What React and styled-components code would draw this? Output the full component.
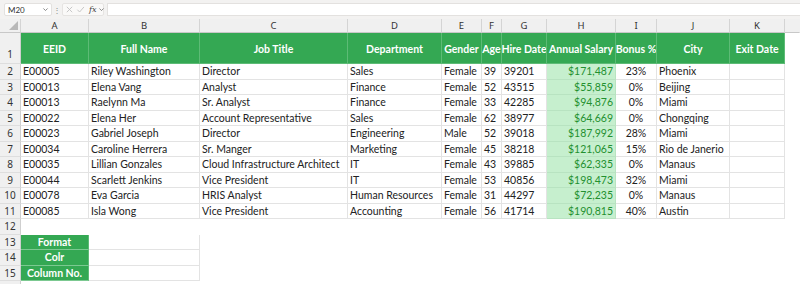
import React from "react";
import styled, { createGlobalStyle, css } from "styled-components";

const GlobalStyle = createGlobalStyle`
  html, body { margin: 0; padding: 0; background: #ffffff; }
  body { font-family: Lato, "Liberation Sans", sans-serif; }
  * { box-sizing: border-box; }
`;

const Page = styled.div`
  width: 800px;
  height: 284px;
  overflow: hidden;
  display: flex;
  flex-direction: column;
  background: #fff;
`;

const FormulaBar = styled.div`
  height: 19px;
  flex: none;
  display: flex;
  align-items: flex-start;
  padding: 3px 0 0 4px;
  background: #f3f2f1;
  gap: 0;
`;

const NameBox = styled.div`
  width: 48px;
  height: 13px;
  background: #fff;
  border: 1px solid #e3e1df;
  border-radius: 2px;
  display: flex;
  align-items: center;
  justify-content: space-between;
  padding: 0 2px 0 3px;
  font-size: 8px;
  color: #333;
`;

const Dots = styled.div`
  width: 10px;
  height: 13px;
  display: flex;
  align-items: center;
  justify-content: center;
  color: #8a8a8a;
  font-size: 8px;
`;

const FxGroup = styled.div`
  width: 42px;
  height: 13px;
  display: flex;
  align-items: center;
  gap: 2px;
  padding: 0 2px;
  border: 1px solid #e6e4e2;
  border-radius: 2px;
  background: #faf9f8;
`;

const Fx = styled.span`
  font-family: "DejaVu Serif", "Liberation Serif", serif;
  font-style: italic;
  font-size: 8px;
  color: #444;
  margin-left: 2px;
`;

const FormulaInput = styled.div`
  flex: 1;
  height: 13px;
  margin-left: 3px;
  background: #fff;
  border: 1px solid #e3e1df;
  border-right: none;
`;

const Sheet = styled.div`
  display: grid;
  grid-template-columns: 21px 68px 111px 148px 94px 40px 20px 45px 69px 41px 73px 55px 1fr;
  grid-template-rows: 14px 31px repeat(15, 15.5px);
  font-size: 10.5px;
  color: #222;
`;

const Corner = styled.div`
  background: #f0f0f0;
  border-right: 1px solid #d4d4d4;
  border-bottom: 1px solid #c8c8c8;
  position: relative;
  &::after {
    content: "";
    position: absolute;
    right: 2px;
    bottom: 2px;
    width: 0;
    height: 0;
    border-left: 9px solid transparent;
    border-bottom: 9px solid #b8b8b8;
  }
`;

const ColHead = styled.div`
  background: #f0f0f0;
  border-right: 1px solid ${(p) => (p.$filler ? "transparent" : "#d4d4d4")};
  border-bottom: 1px solid #c8c8c8;
  display: flex;
  align-items: center;
  justify-content: center;
  font-size: 9.5px;
  color: #333;
  font-family: "Noto Sans", sans-serif;
`;

const RowHead = styled.div`
  background: #f0f0f0;
  border-right: 1px solid #cfcfcf;
  border-bottom: 1px solid #dedede;
  display: flex;
  align-items: ${(p) => (p.$tall ? "flex-end" : "center")};
  justify-content: center;
  padding-bottom: ${(p) => (p.$tall ? "2px" : "0")};
  font-size: 10px;
  color: #333;
  font-family: "Noto Sans", sans-serif;
`;

const Cell = styled.div`
  display: flex;
  align-items: center;
  padding: 0 2px;
  white-space: nowrap;
  overflow: hidden;
  background: #fff;
  border-right: 1px solid #e3e3e3;
  border-bottom: 1px solid #e3e3e3;
  justify-content: ${(p) =>
    p.$align === "right" ? "flex-end" : p.$align === "center" ? "center" : "flex-start"};
  ${(p) =>
    p.$variant === "head" &&
    css`
      background: #34a853;
      color: #fff;
      font-weight: 700;
      justify-content: center;
      border-right: 1px solid #5dbb76;
      border-bottom: 1px solid #5dbb76;
      padding-top: 2px;
    `}
  ${(p) =>
    p.$variant === "label" &&
    css`
      background: #34a853;
      color: #fff;
      font-weight: 700;
      justify-content: center;
      border-right: 1px solid #5dbb76;
      border-bottom: 1px solid #7cc991;
    `}
  ${(p) =>
    p.$variant === "salary" &&
    css`
      background: #c6efce;
      color: #23902f;
      border-right: 1px solid #b8e3c1;
      border-bottom: 1px solid #b8e3c1;
      padding-right: 2px;
    `}
  ${(p) =>
    p.$variant === "blank" &&
    css`
      border-right: none;
      border-bottom: none;
    `}
  ${(p) =>
    p.$span &&
    css`
      grid-column: ${p.$span};
    `}
`;

const Icon = styled.svg`
  display: block;
  flex: none;
`;

const Chevron = () => (
  <Icon width="7" height="7" viewBox="0 0 10 10">
    <path d="M2 3.5 L5 6.5 L8 3.5" fill="none" stroke="#777" strokeWidth="1.2" />
  </Icon>
);
const XIcon = () => (
  <Icon width="9" height="9" viewBox="0 0 10 10">
    <path d="M2 2 L8 8 M8 2 L2 8" fill="none" stroke="#c2c2c2" strokeWidth="1" />
  </Icon>
);
const CheckIcon = () => (
  <Icon width="9" height="9" viewBox="0 0 10 10">
    <path d="M1.5 5.2 L4 7.8 L8.8 2.2" fill="none" stroke="#c2c2c2" strokeWidth="1" />
  </Icon>
);

const columns = ["A", "B", "C", "D", "E", "F", "G", "H", "I", "J", "K"];
const headers = [
  "EEID",
  "Full Name",
  "Job Title",
  "Department",
  "Gender",
  "Age",
  "Hire Date",
  "Annual Salary",
  "Bonus %",
  "City",
  "Exit Date",
];

const rows = [
  ["E00005", "Riley Washington", "Director", "Sales", "Female", "39", "39201", "$171,487", "23%", "Phoenix", ""],
  ["E00013", "Elena Vang", "Analyst", "Finance", "Female", "52", "43515", "$55,859", "0%", "Beijing", ""],
  ["E00013", "Raelynn Ma", "Sr. Analyst", "Finance", "Female", "33", "42285", "$94,876", "0%", "Miami", ""],
  ["E00022", "Elena Her", "Account Representative", "Sales", "Female", "62", "38977", "$64,669", "0%", "Chongqing", ""],
  ["E00023", "Gabriel Joseph", "Director", "Engineering", "Male", "52", "39018", "$187,992", "28%", "Miami", ""],
  ["E00034", "Caroline Herrera", "Sr. Manger", "Marketing", "Female", "45", "38218", "$121,065", "15%", "Rio de Janerio", ""],
  ["E00035", "Lillian Gonzales", "Cloud Infrastructure Architect", "IT", "Female", "43", "39885", "$62,335", "0%", "Manaus", ""],
  ["E00044", "Scarlett Jenkins", "Vice President", "IT", "Female", "53", "40856", "$198,473", "32%", "Miami", ""],
  ["E00078", "Eva Garcia", "HRIS Analyst", "Human Resources", "Female", "31", "44297", "$72,235", "0%", "Manaus", ""],
  ["E00085", "Isla Wong", "Vice President", "Accounting", "Female", "56", "41714", "$190,815", "40%", "Austin", ""],
];

const labels = ["Format", "Colr", "Column No."];

export default function App() {
  return (
    <Page>
      <GlobalStyle />
      <FormulaBar>
        <NameBox>
          <span>M20</span>
          <Chevron />
        </NameBox>
        <Dots>⋮</Dots>
        <FxGroup>
          <XIcon />
          <CheckIcon />
          <Fx>fx</Fx>
          <Chevron />
        </FxGroup>
        <FormulaInput />
      </FormulaBar>
      <Sheet>
        <Corner />
        {columns.map((c) => (
          <ColHead key={c}>{c}</ColHead>
        ))}
        <ColHead $filler />

        <RowHead $tall>1</RowHead>
        {headers.map((h) => (
          <Cell key={h} $variant="head">
            {h}
          </Cell>
        ))}
        <Cell $variant="blank" />

        {rows.map((r, i) => (
          <React.Fragment key={i}>
            <RowHead>{i + 2}</RowHead>
            {r.map((v, j) => (
              <Cell
                key={j}
                $variant={j === 7 ? "salary" : undefined}
                $align={j === 7 ? "right" : j === 8 ? "center" : "left"}
              >
                {v}
              </Cell>
            ))}
            <Cell $variant="blank" />
          </React.Fragment>
        ))}

        <RowHead>12</RowHead>
        <Cell $variant="blank" $span="2 / -1" />

        {labels.map((l, i) => (
          <React.Fragment key={l}>
            <RowHead>{13 + i}</RowHead>
            <Cell $variant="label">{l}</Cell>
            <Cell />
            <Cell $variant="blank" $span="4 / -1" />
          </React.Fragment>
        ))}

        <RowHead />
        <Cell $variant="blank" $span="2 / -1" />
      </Sheet>
    </Page>
  );
}
